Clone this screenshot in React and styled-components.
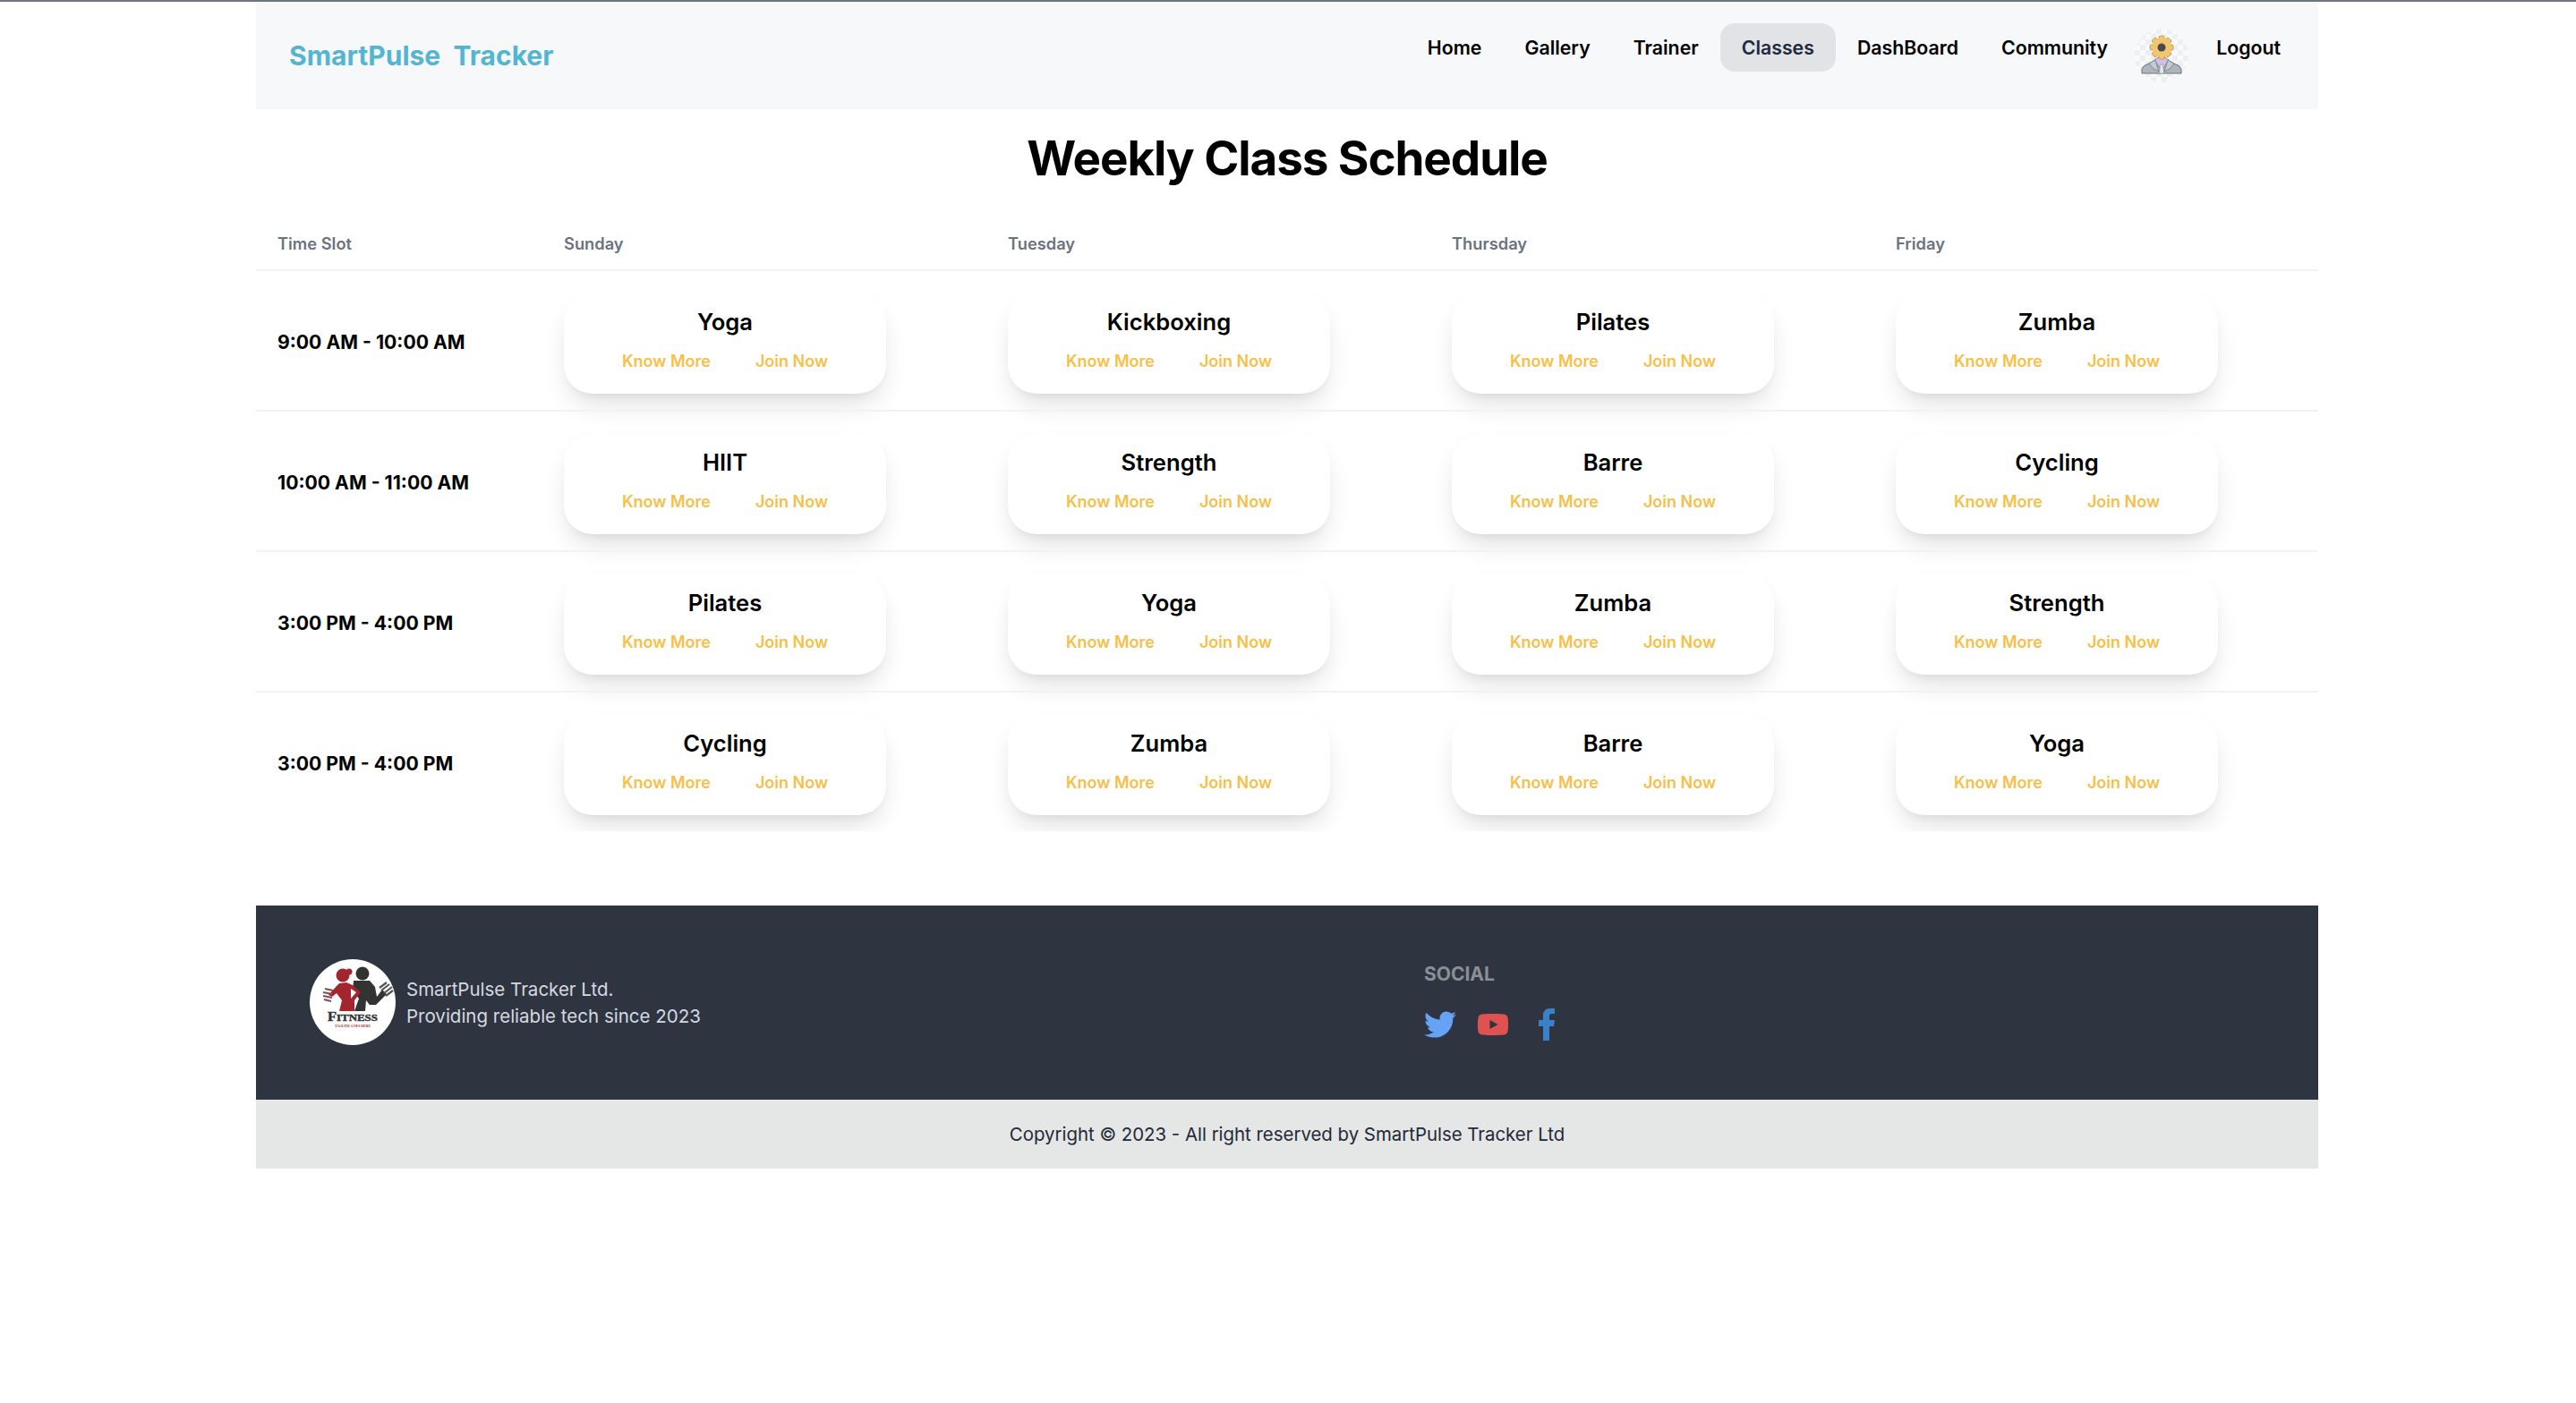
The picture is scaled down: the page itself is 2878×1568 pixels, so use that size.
import React from 'react';
import styled, { createGlobalStyle } from 'styled-components';
import { FaTwitter, FaYoutube } from 'react-icons/fa';

const GlobalStyle = createGlobalStyle`
  html, body {
    margin: 0;
    padding: 0;
    background: #fff;
    font-family: Inter, "Liberation Sans", sans-serif;
    color: #000;
  }
`;

const TopLine = styled.div`
  height: 2px;
  background: #6b7780;
`;

const Container = styled.div`
  width: 2304px;
  margin-left: 286px;
`;

const Navbar = styled.nav`
  height: 120px;
  background: #f7f8fa;
  display: flex;
  justify-content: space-between;
  align-items: flex-start;
  padding: 0 18px 0 37px;
  box-sizing: border-box;
`;

const Logo = styled.a`
  font-size: 30px;
  font-weight: 700;
  line-height: 120px;
  color: #54b5d3;
  white-space: pre;
`;

const Menu = styled.ul`
  display: flex;
  align-items: flex-start;
  list-style: none;
  margin: 0;
  padding: 24px 0 0;
`;

const MenuLink = styled.a`
  display: block;
  height: 54px;
  line-height: 54px;
  padding: 0 24px;
  font-size: 21.3px;
  font-weight: 600;
  border-radius: 16px;
  color: ${p => (p.$active ? '#1f2a3c' : '#000')};
  background: ${p => (p.$active ? '#e1e3e7' : 'transparent')};
`;

const AvatarWrap = styled.li`
  width: 60px;
  height: 60px;
  margin: 6px 7px 0 6px;
`;

const Title = styled.h1`
  margin: 0;
  padding-top: 20px;
  height: 108px;
  box-sizing: border-box;
  text-align: center;
  font-size: 53px;
  line-height: 70px;
  font-weight: 700;
  letter-spacing: -1.1px;
`;

const TableClip = styled.div`
  overflow: hidden;
`;

const Table = styled.table`
  width: 2304px;
  table-layout: fixed;
  border-collapse: collapse;
`;

const HeadCell = styled.th`
  width: ${p => (p.$first ? '320px' : '496px')};
  height: 72px;
  box-sizing: border-box;
  padding: 0 24px 18px;
  vertical-align: bottom;
  text-align: left;
  font-size: 18.3px;
  line-height: 22px;
  font-weight: 600;
  color: #6b7280;
`;

const Row = styled.tr`
  border-top: 2px solid #f2f2f3;
`;

const TimeCell = styled.td`
  padding: 2px 24px 0;
  font-size: 21.2px;
  font-weight: 700;
  white-space: nowrap;
`;

const CardCell = styled.td`
  padding: 25px 24px 18px;
`;

const Card = styled.div`
  width: 360px;
  height: 112px;
  box-sizing: border-box;
  padding-top: 14px;
  border-radius: 32px;
  background: #fff;
  box-shadow: 0 16px 30px -6px rgba(0, 0, 0, 0.13), 0 6px 12px -6px rgba(0, 0, 0, 0.08);
  text-align: center;
`;

const CardTitle = styled.h2`
  margin: 0;
  font-size: 25.6px;
  line-height: 36px;
  font-weight: 600;
`;

const CardLinks = styled.div`
  display: flex;
  justify-content: center;
  gap: 50px;
  margin-top: 14px;
`;

const CardLink = styled.a`
  font-size: 18px;
  line-height: 24px;
  font-weight: 600;
  color: #f6bf4b;
`;

const Footer = styled.footer`
  margin-top: 83px;
  height: 217px;
  box-sizing: border-box;
  background: #2e3440;
  padding: 60px;
  display: grid;
  grid-template-columns: 1245px 1fr;
`;

const Brand = styled.div`
  display: flex;
  align-items: center;
  gap: 12px;
  height: 96px;
`;

const BrandText = styled.p`
  margin: 2px 0 0;
  font-size: 20.5px;
  line-height: 30px;
  color: #d5d9e0;
`;

const SocialTitle = styled.h6`
  margin: 0 0 24px;
  padding-top: 4px;
  font-size: 21px;
  line-height: 26px;
  font-weight: 700;
  color: #8b8f97;
`;

const Socials = styled.div`
  display: flex;
  align-items: center;
  gap: 23px;
  height: 38px;
`;

const SocialLink = styled.a`
  display: flex;
  color: ${p => p.$color};
  font-size: 36px;
  margin-left: ${p => p.$shift || 0}px;
`;

const Copyright = styled.div`
  height: 77px;
  line-height: 77px;
  background: #e5e6e6;
  text-align: center;
  font-size: 20.4px;
  color: #1f2937;
`;

// little gear-headed man next to Logout
const Avatar = () => (
  <svg width="60" height="60" viewBox="0 0 60 60">
    <defs>
      <pattern id="checks" width="12" height="12" patternUnits="userSpaceOnUse">
        <rect width="12" height="12" fill="#f9fafb" />
        <rect width="6" height="6" fill="#eeeff0" />
        <rect x="6" y="6" width="6" height="6" fill="#eeeff0" />
      </pattern>
    </defs>
    <circle cx="30" cy="30" r="30" fill="url(#checks)" />
    <path d="M8 50 L8 45 Q9 41 16 39 L23 35 L37 35 L44 39 Q51 41 52 45 L52 50 Z" fill="#aeb5bd" stroke="#6d747c" strokeWidth="1" />
    <path d="M22 35 L30 47 L38 35 L34 32 L26 32 Z" fill="#cdc3e4" stroke="#7d7a92" strokeWidth="0.8" />
    <path d="M28.5 40 L31.5 40 L32.5 50 L27.5 50 Z" fill="#e8e8ea" stroke="#8c9096" strokeWidth="0.6" />
    <path d="M16 39 L23 35 L27 48 L21 45 Z M44 39 L37 35 L33 48 L39 45 Z" fill="#c4c9cf" stroke="#6d747c" strokeWidth="0.7" />
    <g transform="translate(30 21)">
      {[0, 45, 90, 135].map(a => (
        <rect key={a} x="-3" y="-13" width="6" height="26" rx="1.5" fill="#f3c66d" stroke="#a98a4f" strokeWidth="0.7" transform={`rotate(${a})`} />
      ))}
      <circle r="10.5" fill="#f3c66d" />
      <circle r="4.5" fill="#454b54" />
    </g>
  </svg>
);

const FitnessLogo = () => (
  <svg width="96" height="96" viewBox="0 0 96 96" style={{ flexShrink: 0 }}>
    <circle cx="48" cy="48" r="48" fill="#fff" />
    {/* man, behind */}
    <circle cx="59" cy="16" r="7.5" fill="#333" />
    <path d="M49 24 L67 24 L73 31 L75 42 L81 34 L86 39 L74 51 L67 51 L63 46 L62 58 L50 58 L55 44 L48 35 Z" fill="#333" />
    <g stroke="#555" strokeWidth="2.2">
      <path d="M78 32 L86 26" />
      <path d="M80 35 L89 28" />
      <path d="M83 38 L92 31" />
      <path d="M85 41 L93 35" />
    </g>
    {/* woman */}
    <circle cx="37" cy="18" r="7.5" fill="#a3262e" />
    <circle cx="44" cy="14" r="3.5" fill="#a3262e" />
    <path d="M33 27 L41 26 L48 29 L57 37 L50 46 L50 58 L33 58 L36 46 L30 38 L25 42 L21 40 L30 30 Z" fill="#a3262e" />
    <path d="M46 33 L52 37 L46 44 Z" fill="#fff" />
    <g stroke="#8a4a4e" strokeWidth="2.2">
      <path d="M17 33 L26 35" />
      <path d="M15 37 L25 39" />
      <path d="M15 41 L25 43" />
      <path d="M16 45 L24 47" />
    </g>
    <text x="20" y="69" textLength="56" lengthAdjust="spacingAndGlyphs" fontFamily="Liberation Serif" fontWeight="700" fontSize="11" fill="#333" stroke="#333" strokeWidth="0.4">
      <tspan fontSize="14">F</tspan>ITNESS
    </text>
    <text x="28" y="76" textLength="40" lengthAdjust="spacingAndGlyphs" fontFamily="Liberation Serif" fontWeight="700" fontSize="4.5" fill="#a3262e">TAGLINE GOES HERE</text>
  </svg>
);

const FacebookF = () => (
  <svg width="18" height="36" viewBox="0 0 18 36" fill="currentColor">
    <path d="M5 36 V20 H0 V13 H5 V8 Q5 0 13 0 H18 V6 H14 Q12 6 12 9 V13 H18 L17 20 H12 V36 Z" />
  </svg>
);

const NAV = ['Home', 'Gallery', 'Trainer', 'Classes', 'DashBoard', 'Community'];
const DAYS = ['Sunday', 'Tuesday', 'Thursday', 'Friday'];
const SCHEDULE = [
  { time: '9:00 AM - 10:00 AM', classes: ['Yoga', 'Kickboxing', 'Pilates', 'Zumba'] },
  { time: '10:00 AM - 11:00 AM', classes: ['HIIT', 'Strength', 'Barre', 'Cycling'] },
  { time: '3:00 PM - 4:00 PM', classes: ['Pilates', 'Yoga', 'Zumba', 'Strength'] },
  { time: '3:00 PM - 4:00 PM', classes: ['Cycling', 'Zumba', 'Barre', 'Yoga'] },
];

const App = () => (
  <>
    <GlobalStyle />
    <TopLine />
    <Container>
      <Navbar>
        <Logo>{'SmartPulse  Tracker'}</Logo>
        <Menu>
          {NAV.map(item => (
            <li key={item}>
              <MenuLink $active={item === 'Classes'}>{item}</MenuLink>
            </li>
          ))}
          <AvatarWrap>
            <Avatar />
          </AvatarWrap>
          <li>
            <MenuLink>Logout</MenuLink>
          </li>
        </Menu>
      </Navbar>

      <Title>Weekly Class Schedule</Title>

      <TableClip>
        <Table>
          <thead>
            <tr>
              <HeadCell $first>Time Slot</HeadCell>
              {DAYS.map(d => (
                <HeadCell key={d}>{d}</HeadCell>
              ))}
            </tr>
          </thead>
          <tbody>
            {SCHEDULE.map((row, i) => (
              <Row key={i}>
                <TimeCell>{row.time}</TimeCell>
                {row.classes.map((c, j) => (
                  <CardCell key={j}>
                    <Card>
                      <CardTitle>{c}</CardTitle>
                      <CardLinks>
                        <CardLink>Know More</CardLink>
                        <CardLink>Join Now</CardLink>
                      </CardLinks>
                    </Card>
                  </CardCell>
                ))}
              </Row>
            ))}
          </tbody>
        </Table>
      </TableClip>

      <Footer>
        <Brand>
          <FitnessLogo />
          <BrandText>
            SmartPulse Tracker Ltd.
            <br />
            Providing reliable tech since 2023
          </BrandText>
        </Brand>
        <div>
          <SocialTitle>SOCIAL</SocialTitle>
          <Socials>
            <SocialLink $color="#66a3f5"><FaTwitter /></SocialLink>
            <SocialLink $color="#e05252"><FaYoutube /></SocialLink>
            <SocialLink $color="#3a82c8" $shift={10}><FacebookF /></SocialLink>
          </Socials>
        </div>
      </Footer>
      <Copyright>Copyright © 2023 - All right reserved by SmartPulse Tracker Ltd</Copyright>
    </Container>
  </>
);

export default App;
